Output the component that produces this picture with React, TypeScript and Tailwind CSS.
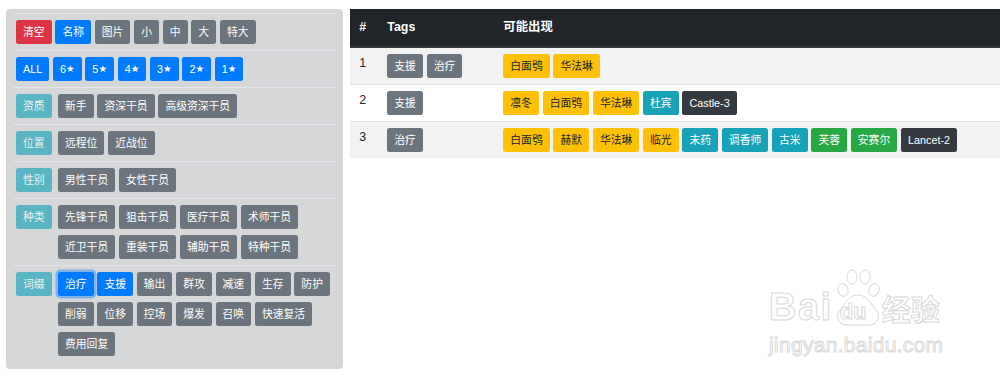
import React from "react";

type Btn = { t: string; c?: string; focus?: boolean };

const colorClass: Record<string, string> = {
  gray: "bg-[#6c757d] text-white",
  blue: "bg-[#007bff] text-white",
  red: "bg-[#dc3545] text-white",
  yellow: "bg-[#ffc107] text-[#212529]",
  teal: "bg-[#17a2b8] text-white",
  green: "bg-[#28a745] text-white",
  dark: "bg-[#343a40] text-white",
};

function Button({ t, c = "gray", focus }: Btn) {
  const star = t.endsWith("★");
  return (
    <span
      className={
        "inline-flex h-[24px] items-center whitespace-nowrap rounded-[2.5px] px-[7px] text-[10.8px] leading-none " +
        colorClass[c] +
        (focus ? " shadow-[0_0_0_2.5px_rgba(38,143,255,0.5)]" : "")
      }
    >
      {star ? (
        <>
          {t.slice(0, -1)}
          <span className="text-[9.5px]" style={{ fontFamily: '"DejaVu Sans", sans-serif' }}>
            ★
          </span>
        </>
      ) : (
        t
      )}
    </span>
  );
}

const g = (list: string[], c = "gray"): Btn[] => list.map((t) => ({ t, c }));

const filterRows: { label?: string; items: Btn[] }[] = [
  {
    items: [
      { t: "清空", c: "red" },
      { t: "名称", c: "blue" },
      ...g(["图片", "小", "中", "大", "特大"]),
    ],
  },
  { items: g(["ALL", "6★", "5★", "4★", "3★", "2★", "1★"], "blue") },
  { label: "资质", items: g(["新手", "资深干员", "高级资深干员"]) },
  { label: "位置", items: g(["远程位", "近战位"]) },
  { label: "性别", items: g(["男性干员", "女性干员"]) },
  {
    label: "种类",
    items: g(["先锋干员", "狙击干员", "医疗干员", "术师干员", "近卫干员", "重装干员", "辅助干员", "特种干员"]),
  },
  {
    label: "词缀",
    items: [
      { t: "治疗", c: "blue", focus: true },
      { t: "支援", c: "blue" },
      ...g(["输出", "群攻", "减速", "生存", "防护", "削弱", "位移", "控场", "爆发", "召唤", "快速复活", "费用回复"]),
    ],
  },
];

const results: { tags: string[]; ops: Btn[] }[] = [
  { tags: ["支援", "治疗"], ops: g(["白面鸮", "华法琳"], "yellow") },
  {
    tags: ["支援"],
    ops: [...g(["凛冬", "白面鸮", "华法琳"], "yellow"), { t: "杜宾", c: "teal" }, { t: "Castle-3", c: "dark" }],
  },
  {
    tags: ["治疗"],
    ops: [
      ...g(["白面鸮", "赫默", "华法琳", "临光"], "yellow"),
      ...g(["末药", "调香师", "古米"], "teal"),
      ...g(["芙蓉", "安赛尔"], "green"),
      { t: "Lancet-2", c: "dark" },
    ],
  },
];

function Watermark() {
  const stroke = "[-webkit-text-stroke:1px_#d9d9d9] text-white";
  return (
    <div
      className="pointer-events-none absolute left-[769px] top-[268px] select-none"
      style={{ fontFamily: '"Liberation Sans", "Noto Sans CJK SC", sans-serif' }}
    >
      <div className="flex items-end">
        <span className={"text-[38px] font-bold leading-none tracking-[1.5px] " + stroke}>Bai</span>
        <div className="relative ml-[2px] h-[58px] w-[46px]">
          <svg width="46" height="58" viewBox="0 0 46 58" className="absolute left-0 top-0" fill="white" stroke="#d9d9d9" strokeWidth="1">
            <ellipse cx="8" cy="22" rx="5" ry="6.5" transform="rotate(-20 8 22)" />
            <ellipse cx="17" cy="9" rx="5" ry="7" />
            <ellipse cx="30" cy="9" rx="5" ry="7" />
            <ellipse cx="39" cy="22" rx="5" ry="6.5" transform="rotate(20 39 22)" />
            <path d="M23 27 C 14 27, 10 36, 5 42 C 0 48, 3 57, 12 57 L 34 57 C 43 57, 46 48, 41 42 C 36 36, 32 27, 23 27 Z" />
          </svg>
          <span className={"absolute left-[5px] top-[33px] text-[22px] font-bold leading-none " + stroke}>du</span>
        </div>
        <span className={"ml-[1px] text-[29px] font-bold leading-none " + stroke}>经验</span>
      </div>
      <div className={"mt-[8px] text-[21px] leading-none tracking-[0.3px] " + stroke}>jingyan.baidu.com</div>
    </div>
  );
}

export default function App() {
  return (
    <div
      className="relative flex h-[379px] w-[1000px] items-start gap-[7px] overflow-hidden bg-white pl-[6px] pt-[9px]"
      style={{ fontFamily: '"Liberation Sans", "Noto Sans CJK SC", sans-serif' }}
    >
      <div className="w-[337px] shrink-0 rounded-[4px] bg-[#d6d7d9] px-[7px] pb-[7px] pt-[4px]">
        {filterRows.map((row, i) => (
          <div key={i} className="flex items-start border-t border-[#e2e5e9] px-[3px] py-[6px]">
            {row.label && (
              <div className="flex w-[42px] shrink-0">
                <span className="inline-flex h-[24px] items-center rounded-[2.5px] bg-[#17a2b8] px-[7px] text-[10.8px] leading-none text-white opacity-65">
                  {row.label}
                </span>
              </div>
            )}
            <div className="flex flex-1 flex-wrap gap-x-[3.8px] gap-y-[6px]">
              {row.items.map((b, j) => (
                <Button key={j} {...b} />
              ))}
            </div>
          </div>
        ))}
      </div>

      <table className="flex-1 border-collapse text-left text-[12.4px] text-[#212529]">
        <thead>
          <tr className="bg-[#212529] text-white">
            <th className="w-[28px] border-b-2 border-[#32383e] px-[9.3px] py-[9.3px] font-bold leading-[18.6px]">#</th>
            <th className="w-[116px] border-b-2 border-[#32383e] px-[9.3px] py-[9.3px] font-bold leading-[18.6px]">Tags</th>
            <th className="border-b-2 border-[#32383e] px-[9.3px] py-[9.3px] font-bold leading-[18.6px]">可能出现</th>
          </tr>
        </thead>
        <tbody>
          {results.map((r, i) => (
            <tr key={i} className={i % 2 === 0 ? "bg-[#f2f2f2]" : "bg-white"}>
              <td className="border-t border-[#dee2e6] px-[9.3px] py-[6px] align-top leading-[18.6px]">{i + 1}</td>
              <td className="border-t border-[#dee2e6] px-[9.3px] py-[6px] align-top">
                <div className="flex gap-[3.8px]">
                  {r.tags.map((t) => (
                    <Button key={t} t={t} />
                  ))}
                </div>
              </td>
              <td className="border-t border-[#dee2e6] px-[9.3px] py-[6px] align-top">
                <div className="flex flex-wrap gap-[3.8px]">
                  {r.ops.map((b, j) => (
                    <Button key={j} {...b} />
                  ))}
                </div>
              </td>
            </tr>
          ))}
        </tbody>
      </table>

      <Watermark />
    </div>
  );
}
